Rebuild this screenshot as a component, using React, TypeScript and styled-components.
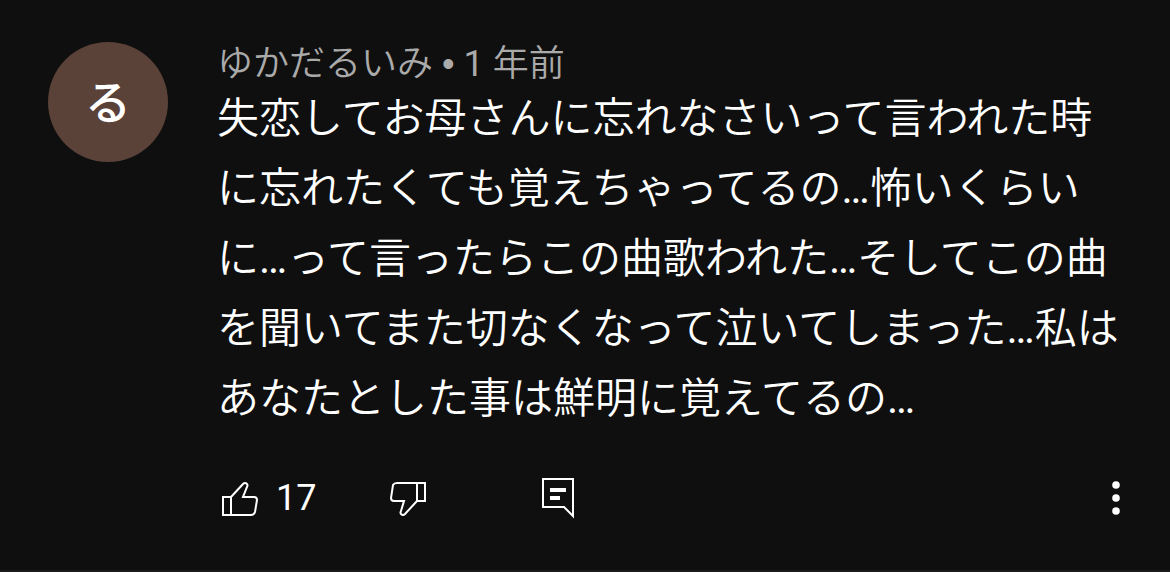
import styled, { createGlobalStyle } from "styled-components";

const GlobalStyle = createGlobalStyle`
  * { box-sizing: border-box; }
  body {
    margin: 0;
    background: #0f0f0f;
    color: #fff;
    font-family: Roboto, "Noto Sans CJK JP DemiLight", "Noto Sans CJK JP", sans-serif;
  }
`;

const Comment = styled.article`
  display: flex;
  align-items: flex-start;
  gap: 49px;
  padding: 42px 48px 48px;
  border-bottom: 2px solid #1b1b1b;
`;

const Avatar = styled.a`
  flex: none;
  display: grid;
  place-items: center;
  width: 120px;
  height: 120px;
  padding-top: 2px;
  border-radius: 50%;
  background: #5a4239;
  color: #fff;
  font-family: Roboto, "Noto Sans CJK JP", sans-serif;
  font-size: 46px;
  font-weight: 500;
  line-height: 1;
  text-decoration: none;
`;

const Content = styled.div`
  flex: 1;
  min-width: 0;
  padding-top: 2px;
`;

const Meta = styled.header`
  color: #aaa;
  font-size: 36px;
  line-height: 40px;
`;

const Separator = styled.span`
  font-family: "Liberation Sans", sans-serif;
`;

const Body = styled.p`
  margin: 0;
  font-size: 42px;
  line-height: 70px;
`;

const Actions = styled.footer`
  display: flex;
  align-items: center;
  margin-top: 40px;
`;

const Action = styled.button<{ $space?: number }>`
  display: flex;
  align-items: center;
  gap: 15px;
  height: 48px;
  margin: 0 ${(p) => p.$space ?? 0}px 0 0;
  padding: 0;
  border: 0;
  background: none;
  color: #fff;
  font: inherit;
  font-size: 36px;
  cursor: pointer;
`;

const MoreAction = styled(Action)`
  margin-left: auto;
`;

const Icon = styled.svg`
  display: block;
  width: 44px;
  height: 48px;
  fill: none;
  stroke: #fff;
  stroke-width: 2;
`;

const DotsIcon = styled(Icon)`
  width: 12px;
  fill: #fff;
  stroke: none;
`;

export default function App() {
  return (
    <>
      <GlobalStyle />
      <Comment>
        <Avatar href="#channel">る</Avatar>
        <Content>
          <Meta>
            ゆかだるいみ <Separator>•</Separator> <time>1 年前</time>
          </Meta>
          <Body>
            失恋してお母さんに忘れなさいって言われた時に忘れたくても覚えちゃってるの…怖いくらいに…って言ったらこの曲歌われた…そしてこの曲を聞いてまた切なくなって泣いてしまった…私はあなたとした事は鮮明に覚えてるの…
          </Body>
          <Actions>
            <Action $space={69} aria-label="高評価 17">
              <Icon viewBox="0 0 44 48" aria-hidden="true">
                <path d="M6 23H14V41H6ZM14 23L26 10Q28 8 30 10Q31 11 30 13L26 23H37Q40 23 40 26L38 38Q37 41 34 41H14" />
              </Icon>
              17
            </Action>
            <Action $space={108} aria-label="低評価">
              <Icon viewBox="0 0 44 48" aria-hidden="true">
                <path d="M32 9H40V27H32ZM32 27L20 40Q18 42 16 40Q15 39 16 37L19 27H9Q6 27 6 24L8 11Q9 9 12 9H32" />
              </Icon>
            </Action>
            <Action aria-label="返信">
              <Icon viewBox="0 0 44 48" aria-hidden="true">
                <path d="M6 5H36V42L27 33H6Z" />
                <path d="M13 16H29M13 24H23" strokeWidth="4" />
              </Icon>
            </Action>
            <MoreAction aria-label="その他の操作">
              <DotsIcon viewBox="0 0 12 48" aria-hidden="true">
                <circle cx="6" cy="11" r="3.8" />
                <circle cx="6" cy="24" r="3.8" />
                <circle cx="6" cy="37" r="3.8" />
              </DotsIcon>
            </MoreAction>
          </Actions>
        </Content>
      </Comment>
    </>
  );
}
